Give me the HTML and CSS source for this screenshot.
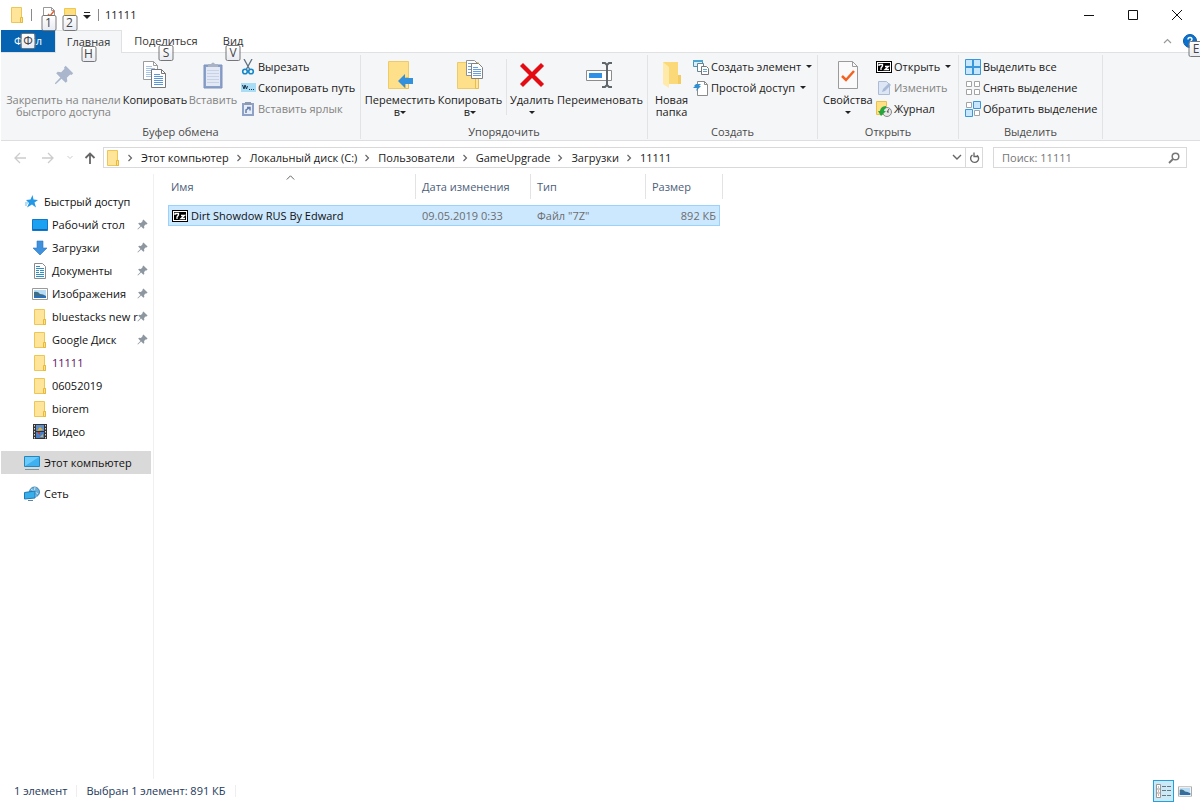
FILE: index.html
```
<!DOCTYPE html>
<html lang="ru">
<head>
<meta charset="utf-8">
<title>11111</title>
<link rel="stylesheet" href="styles.css">
</head>
<body>
<svg class="defs" aria-hidden="true">
  <symbol id="folder" viewBox="0 0 14 16"><path d="M1.500.5h10v10h1v5h-11z" fill="#ffe59a" stroke="#eec655"/><path d="M10.500 10.500h2v5h-2z" fill="#ffe18a" stroke="#e6b93f"/></symbol>
  <symbol id="pin" viewBox="0 0 12 12"><path d="M7 .5 11.500 5l-1 1-.8-.3-2 2 .3 2-1 1L4.500 8.200 1 11.500l-.5-.5 3.300-3.500L1.300 5l1-1 2 .3 2-2L6 1.500z"/></symbol>
  <symbol id="sevenz" viewBox="0 0 16 12"><path d="M0 0h16v12H0z" fill="#000"/><path d="M1 1h14v10H1z" fill="#fff"/><path d="M2 2h12v8H2z" fill="#000"/><path d="M3 5V3.500h3.500V5L5 7v2M9 5.500h3.500L9 8.500h4" fill="none" stroke="#fff" stroke-width="1.300"/></symbol>
  <symbol id="picture" viewBox="0 0 16 12"><path d="M.5.5h15v11H.5z" fill="#fff" stroke="#9a9a9a"/><path d="M2 2h12v8H2z" fill="#b8dcf5"/><path d="M2 4q4-1 6 2 3 0 6 2v1H2z" fill="#3e6d87"/><path d="M2 8h12v2H2z" fill="#2b6fbb"/></symbol>
  <symbol id="chev" viewBox="0 0 6 8"><path d="M1.500 1 4.500 4l-3 3" fill="none" stroke="#666" stroke-width="1.200"/></symbol>
</svg>

<div class="window">
  <header class="titlebar">
    <svg class="t-folder" viewBox="0 0 14 16"><use href="#folder"/></svg>
    <span class="bar"></span>
    <button class="quick" aria-label="Свойства"><svg width="14" height="16" viewBox="0 0 14 16"><path d="M1.500.5h8l3 3v12h-11z" fill="#fff" stroke="#999"/><path d="M9.500.5v3h3" fill="none" stroke="#999"/><path d="m6 7 2 2 4-5" fill="none" stroke="#e8602c" stroke-width="1.500"/></svg><kbd class="tip">1</kbd></button>
    <button class="quick" aria-label="Новая папка"><svg width="14" height="16" viewBox="0 0 14 16"><path d="M1.500 1.500h11v12h-11z" fill="#ffdf7d" stroke="#f0c84b"/></svg><kbd class="tip">2</kbd></button>
    <button class="more" aria-label="Настройка панели"><svg width="8" height="7" viewBox="0 0 8 7"><path d="M1 0h6v1H1zM0 3h8L4 7z" fill="#222"/></svg></button>
    <span class="bar"></span>
    <h1 class="title">11111</h1>
    <div class="winbtns">
      <button aria-label="Свернуть"><svg width="12" height="12"><path d="M1 6.500h10" stroke="#111"/></svg></button>
      <button aria-label="Развернуть"><svg width="12" height="12"><path d="M1.500 1.500h9v9h-9z" fill="none" stroke="#111"/></svg></button>
      <button aria-label="Закрыть"><svg width="12" height="12"><path d="m1 1 10 10M11 1 1 11" stroke="#111"/></svg></button>
    </div>
  </header>

  <nav class="tabs">
    <button class="tab file">Файл<kbd class="tip">Ф</kbd></button>
    <button class="tab active">Главная<kbd class="tip">H</kbd></button>
    <button class="tab share">Поделиться<kbd class="tip">S</kbd></button>
    <button class="tab view">Вид<kbd class="tip">V</kbd></button>
    <div class="tabs-end">
      <button class="collapse" aria-label="Свернуть ленту"><svg width="9" height="6"><path d="m1 5 3.500-3.500L8 5" fill="none" stroke="#999" stroke-width="1.200"/></svg></button>
      <button class="help" aria-label="Справка"><svg width="14" height="14" viewBox="0 0 14 14"><circle cx="7" cy="7" r="6.500" fill="#0b72d0" stroke="#0a5aa8"/><path d="M5 5.500Q5 3.500 7 3.500t2 1.800Q9 6.500 7 8M7 9.500V11" fill="none" stroke="#fff" stroke-width="1.400"/></svg><kbd class="tip">E</kbd></button>
    </div>
  </nav>

  <div class="ribbon">
    <section class="group clip">
      <div class="tools">
        <button class="big wide-pin off"><span class="ico"><svg width="20" height="20" viewBox="0 0 12 12" fill="#a9b6cc"><use href="#pin"/></svg></span>Закрепить на панели<br>быстрого доступа</button>
        <button class="big copy"><span class="ico"><svg width="26" height="30" viewBox="0 0 26 30"><path d="M1.500 1.500h10l4 4v14h-14z" fill="#fff" stroke="#9b9b9b"/><path d="M11.500 1.500v4h4" fill="none" stroke="#9b9b9b"/><path d="M4 6.500h6M4 8.500h9M4 10.500h9M4 12.500h9M4 14.500h9M4 16.500h9" stroke="#a6c4ea"/><path d="M9.500 9.500h10l4 4v14h-14z" fill="#fff" stroke="#777"/><path d="M19.500 9.500v4h4" fill="none" stroke="#777"/><path d="M12 14.500h6M12 16.500h9M12 18.500h9M12 20.500h9M12 22.500h9M12 24.500h9" stroke="#5b95dc"/></svg></span>Копировать</button>
        <button class="big paste off"><span class="ico"><svg width="20" height="28" viewBox="0 0 20 28"><path d="M1 4h18v23H1z" fill="#8ba1ca" stroke="#7c93bf"/><path d="M3 6h14v19H3z" fill="#e2e9f5"/><path d="M4 9.500h12M4 12.500h12M4 15.500h12M4 18.500h12M4 21.500h12" stroke="#c6d2e7"/><path d="M5 6V3h3q2-3 4 0h3v3z" fill="#a8b3c6"/></svg></span>Вставить</button>
        <div class="stack">
          <button class="small"><span class="sico"><svg width="14" height="16" viewBox="0 0 14 16"><path d="M3 0 9 11M11 0 5 11" stroke="#617283" stroke-width="1.300"/><circle cx="4" cy="12.500" r="2.300" fill="none" stroke="#1588ca" stroke-width="1.600"/><circle cx="10" cy="12.500" r="2.300" fill="none" stroke="#1588ca" stroke-width="1.600"/></svg></span>Вырезать</button>
          <button class="small"><span class="sico"><svg width="15" height="9" viewBox="0 0 15 9"><path d="M0 0h15v9H0z" fill="#a9dcf5"/><path d="m1.500 2 1.500 4 1-4 1.500 4 1-3M8 6.500h1M10 6.500h1M12 6.500h1" fill="none" stroke="#15354b"/></svg></span>Скопировать путь</button>
          <button class="small off"><span class="sico"><svg width="14" height="16" viewBox="0 0 14 16"><path d="M2 3h10v11H2z" fill="#e7edf7" stroke="#8fa1c4" stroke-width="2"/><path d="M4 1h6v3H4z" fill="#8d9ab2"/><path d="M5 12V9l3-2M6 6.500h3v3" fill="none" stroke="#667faf" stroke-width="1.500"/></svg></span>Вставить ярлык</button>
        </div>
      </div>
      <h2>Буфер обмена</h2>
    </section>

    <section class="group organize">
      <div class="tools">
        <button class="big move"><span class="ico"><svg width="28" height="30" viewBox="0 0 28 30"><path d="M2.500 1.500h20v27h-20z" fill="#ffe08a" stroke="#eecb65"/><path d="M19.500 17.500h3v11h-3z" fill="#ffe9a7" stroke="#e8be4b"/><path d="m12 21 7-7v4h8v6h-8v4z" fill="#3290dd"/></svg></span>Переместить<br>в<i class="caret"></i></button>
        <button class="big copyto"><span class="ico"><svg width="28" height="30" viewBox="0 0 28 30"><path d="M1.500 2.500h21v26h-21z" fill="#ffe08a" stroke="#eecb65"/><path d="M19.500 17.500h3v11h-3z" fill="#ffe39a" stroke="#e8be4b"/><path d="M10.500.5h8l3 3v12h-11z" fill="#fff" stroke="#929292"/><path d="M12 3.500h6M12 6.500h7M12 9.500h7M12 12.500h7" stroke="#6e9fd9"/><path d="M15.500 3.500h7l4 4v11h-11z" fill="#fff" stroke="#828282"/><path d="M17 7.500h5M17 9.500h8M17 11.500h8M17 13.500h8M17 15.500h8" stroke="#6a9fdd"/></svg></span>Копировать<br>в<i class="caret"></i></button>
        <span class="rule"></span>
        <button class="big delete"><span class="ico"><svg width="26" height="26" viewBox="0 0 26 26"><path d="m2 4 2-2 9 9 9-9 2 2-9 9 9 9-2 2-9-9-9 9-2-2 9-9z" fill="#e40b12" stroke="#e40b12" stroke-width="1.500"/></svg></span>Удалить<br><i class="caret"></i></button>
        <button class="big rename"><span class="ico"><svg width="28" height="28" viewBox="0 0 28 28"><path d="M1.500 9.500h25v10h-25z" fill="#fff" stroke="#8c8c8c"/><path d="M4 12h13v5H4z" fill="#2e91e5"/><path d="M17 2h3l2 2 2-2h3M22 4v20M17 26h3l2-2 2 2h3" fill="none" stroke="#5f666b" stroke-width="2"/></svg></span>Переименовать</button>
      </div>
      <h2>Упорядочить</h2>
    </section>

    <section class="group create">
      <div class="tools">
        <button class="big newf"><span class="ico"><svg width="20" height="28" viewBox="0 0 20 28"><path d="M1 1h15v14h3v8H4z" fill="#fbd979"/><path d="M16 14h3v9h-3z" fill="#f3cb5f"/><path d="m1 1 6 5v21l-6-4z" fill="#ffeaa9"/></svg></span>Новая<br>папка</button>
        <div class="stack">
          <button class="small"><span class="sico"><svg width="16" height="16" viewBox="0 0 16 16"><path d="M.5 1.500h9v6h-9z" fill="#d8effb" stroke="#4e91b5"/><path d="M0 1h10v2H0z" fill="#4ba6d2"/><path d="M4.500 4.500h6v8h-6z" fill="#fff" stroke="#668494"/><path d="M8.500 7.500h5l2 2v6h-7z" fill="#fff" stroke="#777"/><path d="M10 10.500h4M10 12.500h4" stroke="#68a2cf"/></svg></span>Создать элемент<i class="caret"></i></button>
          <button class="small"><span class="sico"><svg width="16" height="16" viewBox="0 0 16 16"><path d="M4.500 1.500h7l3 3v11h-10z" fill="#fff" stroke="#8b8b8b"/><path d="M11.500 1.500v3h3" fill="none" stroke="#8b8b8b"/><path d="M3 4h5L6 6h2L3 11l1-3H0l2-2H1z" fill="#318ed1"/></svg></span>Простой доступ<i class="caret"></i></button>
        </div>
      </div>
      <h2>Создать</h2>
    </section>

    <section class="group open">
      <div class="tools">
        <button class="big props"><span class="ico"><svg width="22" height="30" viewBox="0 0 22 30"><path d="M1.500 1.500h14l5 5v22h-19z" fill="#fafafa" stroke="#9b9b9b"/><path d="M15.500 1.500v5h5" fill="none" stroke="#9b9b9b"/><path d="m5 16 4 4 8-9" fill="none" stroke="#f26322" stroke-width="2.500"/></svg></span>Свойства<br><i class="caret"></i></button>
        <div class="stack">
          <button class="small"><span class="sico"><svg width="16" height="12"><use href="#sevenz"/></svg></span>Открыть<i class="caret"></i></button>
          <button class="small off"><span class="sico"><svg width="14" height="16" viewBox="0 0 14 16"><path d="M1.500 1.500h8l3 3v10h-11z" fill="#dce6f5" stroke="#acbcd7"/><path d="m5 12 1-3 6-6 2 2-6 6z" fill="#a9bad7"/></svg></span>Изменить</button>
          <button class="small"><span class="sico"><svg width="16" height="16" viewBox="0 0 16 16"><path d="M.5.5h10v13H.5z" fill="#ffe083" stroke="#e8c04d"/><circle cx="11" cy="11" r="4.500" fill="#e6e6e6" stroke="#888"/><path d="m13 8-2 3h2" fill="none" stroke="#555"/><path d="M10 5C6 5 4 8 4 10H2l3 5 5-5H8q0-2 2-3z" fill="#25a53d"/></svg></span>Журнал</button>
        </div>
      </div>
      <h2>Открыть</h2>
    </section>

    <section class="group select">
      <div class="tools">
        <div class="stack">
          <button class="small"><span class="sico"><svg width="16" height="16"><path d="M.5.5h15v15H.5z" fill="#c7e8fc" stroke="#3a97dc"/><path d="M8 0v16M0 8h16" stroke="#3a97dc" stroke-width="2"/></svg></span>Выделить все</button>
          <button class="small"><span class="sico"><svg width="16" height="16" fill="#fff" stroke="#a3a3a3"><path d="M1.500 1.500h5v5h-5zM9.500 1.500h5v5h-5zM1.500 9.500h5v5h-5zM9.500 9.500h5v5h-5z"/></svg></span>Снять выделение</button>
          <button class="small"><span class="sico"><svg width="16" height="16" fill="#fff" stroke="#a3a3a3"><path d="M1.500 1.500h5v5h-5zM9.500 9.500h5v5h-5z"/><path d="M8.500.5h7v7h-7zM.5 8.500h7v7h-7z" fill="#c7e8fc" stroke="#3a97dc"/></svg></span>Обратить выделение</button>
        </div>
      </div>
      <h2>Выделить</h2>
    </section>
  </div>

  <div class="navbar">
    <div class="arrows">
      <button aria-label="Назад"><svg width="12" height="12"><path d="M12 6H1M6 1 1 6l5 5" fill="none" stroke="#ccc" stroke-width="1.300"/></svg></button>
      <button aria-label="Вперед"><svg width="12" height="12"><path d="M0 6h11M6 1l5 5-5 5" fill="none" stroke="#ccc" stroke-width="1.300"/></svg></button>
      <button class="recent" aria-label="Последние"><svg width="6" height="5"><path d="m.5 1 2.500 2.500L5.500 1" fill="none" stroke="#ccc"/></svg></button>
      <button class="up" aria-label="Вверх"><svg width="12" height="12"><path d="M6 12V1M1.500 6 6 1.500 10.500 6" fill="none" stroke="#666" stroke-width="1.800"/></svg></button>
    </div>
    <div class="address">
      <svg class="a-folder" viewBox="0 0 14 16"><use href="#folder"/></svg>
      <ol class="crumbs">
        <li><svg><use href="#chev"/></svg><a href="#">Этот компьютер</a></li>
        <li><svg><use href="#chev"/></svg><a href="#">Локальный диск (C:)</a></li>
        <li><svg><use href="#chev"/></svg><a href="#">Пользователи</a></li>
        <li><svg><use href="#chev"/></svg><a href="#">GameUpgrade</a></li>
        <li><svg><use href="#chev"/></svg><a href="#">Загрузки</a></li>
        <li><svg><use href="#chev"/></svg><a href="#">11111</a></li>
      </ol>
      <button class="drop" aria-label="Предыдущие расположения"><svg width="10" height="7"><path d="m1 1 4 4 4-4" fill="none" stroke="#666" stroke-width="1.400"/></svg></button>
      <button class="refresh" aria-label="Обновить"><svg width="11" height="12" viewBox="0 0 11 12"><path d="M8 3.200A4 4 0 1 1 3.500 3" fill="none" stroke="#666" stroke-width="1.400"/><path d="M5 .5v4h4" fill="none" stroke="#666" stroke-width="1.300"/></svg></button>
    </div>
    <label class="search"><input type="search" placeholder="Поиск: 11111" aria-label="Поиск"><svg width="12" height="12"><circle cx="7.500" cy="4.500" r="3.300" fill="none" stroke="#777" stroke-width="1.500"/><path d="M5 7 1 11" stroke="#777" stroke-width="1.800"/></svg></label>
  </div>

  <div class="content">
    <aside class="side">
      <a class="node" href="#"><span class="nico star"><svg width="13" height="13" viewBox="0 0 13 13"><path d="M7.500 0 8.500 4.500 13 5 9.500 7.500 11 12.500 7 9.500l-5 3L4 8 1 5l4.500-.5z" fill="#2498e6"/><path d="M0 8h3M0 10h2" stroke="#69b9ed"/></svg></span>Быстрый доступ</a>
      <ul class="items">
        <li><a class="item" href="#"><span class="nico"><svg width="16" height="12"><path d="M.5.5h15v11H.5z" fill="#1ba1f2" stroke="#1377c9"/><path d="M1 10.500h14" stroke="#1066b1"/></svg></span><span class="name">Рабочий стол</span><svg class="pin"><use href="#pin"/></svg></a></li>
        <li><a class="item" href="#"><span class="nico"><svg width="16" height="16"><path d="M5 1h6v7h4l-7 7-7-7h4z" fill="#3f90dd" stroke="#2879c4" stroke-width=".6"/></svg></span><span class="name">Загрузки</span><svg class="pin"><use href="#pin"/></svg></a></li>
        <li><a class="item" href="#"><span class="nico"><svg width="12" height="16"><path d="M.5.5h8l3 3v12H.5z" fill="#fff" stroke="#8b8b8b"/><path d="M2 3.500h4M2 5.500h8M2 7.500h3M6 7.500h4M2 9.500h3M6 9.500h4M2 11.500h8M2 13.500h8" stroke="#2d8ec8"/></svg></span><span class="name">Документы</span><svg class="pin"><use href="#pin"/></svg></a></li>
        <li><a class="item" href="#"><span class="nico"><svg width="16" height="12"><use href="#picture"/></svg></span><span class="name">Изображения</span><svg class="pin"><use href="#pin"/></svg></a></li>
        <li><a class="item" href="#"><span class="nico"><svg width="14" height="16"><use href="#folder"/></svg></span><span class="name">bluestacks new r</span><svg class="pin"><use href="#pin"/></svg></a></li>
        <li><a class="item" href="#"><span class="nico"><svg width="14" height="16"><use href="#folder"/></svg></span><span class="name">Google Диск</span><svg class="pin"><use href="#pin"/></svg></a></li>
        <li><a class="item" href="#"><span class="nico"><svg width="14" height="16"><use href="#folder"/></svg></span><span class="name violet">11111</span></a></li>
        <li><a class="item" href="#"><span class="nico"><svg width="14" height="16"><use href="#folder"/></svg></span><span class="name">06052019</span></a></li>
        <li><a class="item" href="#"><span class="nico"><svg width="14" height="16"><use href="#folder"/></svg></span><span class="name">biorem</span></a></li>
        <li><a class="item" href="#"><span class="nico"><svg width="14" height="15"><path d="M0 0h14v15H0z" fill="#333"/><path d="M1.500 1v14M12.500 1v14" stroke="#ddd" stroke-dasharray="1.500 1.500"/><path d="M3 1h8v6H3z" fill="#5f8fcb"/><path d="M3 8h8v6H3z" fill="#4a80c8"/><path d="M4 7l3-4 3 3z" fill="#dfad35"/><path d="M4 8h3v3z" fill="#c63b2f"/><path d="M7 13l3-3v3z" fill="#dfad35"/></svg></span><span class="name">Видео</span></a></li>
      </ul>
      <a class="node current" href="#"><span class="nico"><svg width="16" height="14"><path d="M.5.5h15v10H.5z" fill="#6ccbfb" stroke="#2685b9"/><path d="M1 10 15 1v9z" fill="#3fb0f0"/><path d="M1 13.500h14" stroke="#7895a6"/></svg></span>Этот компьютер</a>
      <a class="node" href="#"><span class="nico"><svg width="16" height="16"><circle cx="10.500" cy="6" r="5" fill="#68aed8" stroke="#4386b1"/><path d="M7 3q4 3 7 5M11 1q-2 5 1 10" fill="none" stroke="#c6e3f3"/><path d="M.5 6.500 11 5v7L.5 13z" fill="#35aeea" stroke="#1d78b6"/><path d="M4 14.500h5" stroke="#668499"/></svg></span>Сеть</a>
    </aside>

    <main class="files">
      <table class="list">
        <colgroup><col class="c-name"><col class="c-date"><col class="c-type"><col class="c-size"><col class="c-end"></colgroup>
        <thead><tr><th class="sorted">Имя<svg class="sort" width="9" height="5"><path d="m.8 4.500 3.700-3.700 3.700 3.700" fill="none" stroke="#666"/></svg></th><th>Дата изменения</th><th>Тип</th><th colspan="2">Размер</th></tr></thead>
        <tbody><tr><td class="first"><span class="fname"><svg width="16" height="12"><use href="#sevenz"/></svg>Dirt Showdow RUS By Edward</span></td><td>09.05.2019 0:33</td><td>Файл "7Z"</td><td class="size">892 КБ</td><td class="blank"></td></tr></tbody>
      </table>
    </main>
  </div>

  <footer class="status">
    <span class="cell">1 элемент</span><span class="cell">Выбран 1 элемент: 891 КБ</span>
    <div class="views">
      <button class="on" aria-label="Таблица"><svg width="16" height="14"><path d="M.5.5h4v13h-4zM.5 5h4M.5 9h4" fill="#fff" stroke="#999"/><path d="M2 3h1" stroke="#888"/><path d="M2 7h1M2 11h1" stroke="#e05030"/><path d="M6 2.500h4M11 2.500h4M6 6.500h4M11 6.500h4M6 11.500h4M11 11.500h4" stroke="#667780"/></svg></button>
      <button aria-label="Крупные значки"><svg width="14" height="11" viewBox="0 0 16 12"><use href="#picture"/></svg></button>
    </div>
  </footer>
</div>
</body>
</html>
```
FILE: styles.css
```
* { box-sizing: border-box; }
body { margin: 0; overflow: hidden; background: #fff; color: #1a1a1a; font: 11px/12px "Open Sans", "Noto Sans", sans-serif; }
button { margin: 0; padding: 0; border: 0; background: none; color: inherit; font: inherit; white-space: nowrap; }
a { color: inherit; text-decoration: none; }
ol, ul { margin: 0; padding: 0; list-style: none; }
h1, h2 { margin: 0; font: inherit; }
svg { display: block; flex: none; }
.defs { position: absolute; width: 0; height: 0; }
.window { display: flex; flex-direction: column; min-height: 100vh; padding-left: 1px; }

.titlebar { display: flex; align-items: center; height: 30px; padding-left: 9px; }
.t-folder { width: 14px; height: 16px; }
.bar { width: 1px; height: 12px; margin: 0 6px 0 7px; background: #8a8a8a; }
.quick { position: relative; width: 21px; height: 16px; }
.quick svg { margin: 0 auto; }
.more { width: 14px; display: grid; place-items: center; }
.more + .bar { margin-left: 4px; }
.title { font-size: 11px; line-height: 16px; }
.winbtns { display: flex; margin: 0 1px 0 auto; }
.winbtns button { display: grid; place-items: center; width: 44px; height: 30px; }
.tip { position: absolute; left: 50%; top: 8px; width: 15px; height: 16px; transform: translateX(-50%); border: 1px solid #767676; border-radius: 2px; background: linear-gradient(#fff, #e9ebf3); color: #444; font: 12px/14px "Open Sans", sans-serif; text-align: center; z-index: 2; }

.tabs { display: flex; height: 23px; border-bottom: 1px solid #dfe1e3; }
.tab { position: relative; height: 22px; color: #333; }
.tab .tip { top: 15px; }
.file { width: 54px; background: #0563b1; color: #fff; }
.file .tip { top: 3px; }
.active { width: 67px; height: 23px; border: 1px solid #dfe1e3; border-bottom: 0; background: #f5f6f7; }
.share { width: 88px; }
.view { width: 46px; }
.tabs-end { display: flex; align-items: center; margin-left: auto; }
.collapse { margin-right: 10px; }
.help { position: relative; width: 18px; }
.help svg { margin-left: 1px; }
.help .tip { left: 14px; top: 7px; }

.ribbon { display: flex; min-height: 88px; padding-top: 2px; background: #f5f6f7; border-bottom: 1px solid #dcdee0; }
.group { display: flex; flex-direction: column; flex: none; margin-bottom: 1px; border-right: 1px solid #e1e3e5; }
.group h2 { margin-top: auto; color: #4a4a4a; line-height: 14px; text-align: center; }
.tools { display: flex; align-items: flex-start; padding-left: 6px; }
.clip { width: 360px; }
.clip .tools { padding-left: 4px; }
.organize { width: 287px; }
.organize .tools { padding-left: 3px; }
.create { width: 170px; }
.open { width: 141px; }
.open .tools { padding-left: 5px; }
.select { width: 144px; }
.big { display: block; padding-top: 3px; line-height: 12px; text-align: center; }
.ico { display: grid; place-items: center; height: 34px; margin-bottom: 2px; }
.off { color: #838383; }
.wide-pin { width: 117px; }
.copy { width: 66px; }
.paste { width: 50px; }
.move { width: 72px; }
.copyto { width: 68px; }
.delete { width: 50px; }
.rename { width: 84px; }
.newf { width: 35px; }
.props { width: 49px; }
.rule { width: 1px; height: 56px; margin: 4px 0 0 2px; background: #e1e3e5; }
.caret { display: inline-block; margin-left: 4px; vertical-align: 2px; border: 3px solid transparent; border-top-color: #222; border-bottom: 0; }
br + .caret { margin-left: 0; }
.stack { display: flex; flex-direction: column; align-items: flex-start; padding: 1px 0 0 4px; }
.clip .stack { padding-left: 2px; }
.select .stack { padding-left: 0; }
.small { display: flex; align-items: center; height: 21px; }
.sico { display: grid; place-items: center; width: 16px; margin-right: 2px; }
.small .caret { margin-left: 5px; }

.navbar { display: flex; align-items: center; height: 33px; padding-right: 13px; }
.arrows { display: flex; align-items: center; width: 102px; padding-left: 5px; }
.arrows button { display: grid; place-items: center; width: 28px; height: 20px; }
.arrows .recent { width: 16px; }
.arrows .up { width: 24px; }
.address { display: flex; align-items: center; flex: 1; height: 21px; border: 1px solid #d9d9d9; }
.a-folder { width: 14px; height: 16px; margin: 0 0 0 2px; }
.crumbs, .crumbs li { display: flex; align-items: center; }
.crumbs svg { width: 6px; height: 8px; margin: 0 8px 0 7px; }
.drop { display: grid; place-items: center; width: 16px; height: 19px; margin-left: auto; }
.refresh { display: grid; place-items: center; width: 17px; height: 19px; border-left: 1px solid #d9d9d9; }
.search { display: flex; align-items: center; width: 194px; height: 21px; margin-left: 10px; padding: 0 6px 0 8px; border: 1px solid #d9d9d9; }
.search input { flex: 1; min-width: 0; padding: 0; border: 0; outline: 0; background: none; font: inherit; }
.search input::placeholder { color: #757575; opacity: 1; }

.content { display: flex; flex: 1; }
.side { width: 153px; padding: 16px 2px 0 0; border-right: 1px solid #f0f0f0; color: #111; }
.node, .item { display: flex; align-items: center; height: 23px; white-space: nowrap; }
.node { padding-left: 22px; }
.node .nico { margin-right: 4px; }
.nico { display: grid; place-items: center; flex: none; width: 17px; }
.items { margin-bottom: 8px; }
.item { padding-left: 30px; }
.name { flex: 1; min-width: 0; margin-left: 4px; line-height: 16px; }
.violet { color: #5a1060; }
.pin { width: 11px; height: 11px; margin: 0 3px 0 2px; fill: #8d979f; }
.current { margin-bottom: 8px; background: #d9d9d9; }

.files { flex: 1; padding-left: 14px; }
.list { width: 555px; border-spacing: 0; table-layout: fixed; }
.c-name { width: 248px; }
.c-date, .c-type { width: 115px; }
.c-size { width: 74px; }
.c-end { width: 3px; }
.list th { height: 25px; padding: 0 0 0 6px; border-right: 1px solid #e3e3e3; color: #4c607a; font-weight: 400; text-align: left; }
.list .sorted { position: relative; padding-left: 3px; }
.sort { position: absolute; top: 1px; left: 50%; margin-left: -6px; }
.list thead::after { content: ""; display: block; height: 6px; }
.list td { height: 21px; padding: 0 0 0 6px; border: 1px solid #99d1ff; border-width: 1px 0; background: #cce8ff; color: #6d6d6d; }
.list .first { padding-left: 3px; border-left-width: 1px; color: #111; }
.list .size { padding: 0 3px 0 0; border-right-width: 1px; text-align: right; }
.list .blank { padding: 0; border: 0; background: none; }
.fname { display: flex; align-items: center; gap: 3px; }

.status { display: flex; align-items: center; height: 24px; padding: 0 5px 0 4px; color: #1e395b; }
.cell { padding: 0 9px; border-right: 1px solid #eee; }
.views { display: flex; align-items: center; margin-left: auto; }
.views button { display: grid; place-items: center; width: 21px; height: 22px; }
.views .on { border: 1px solid #26a0da; background: #cbe8f6; }
```
